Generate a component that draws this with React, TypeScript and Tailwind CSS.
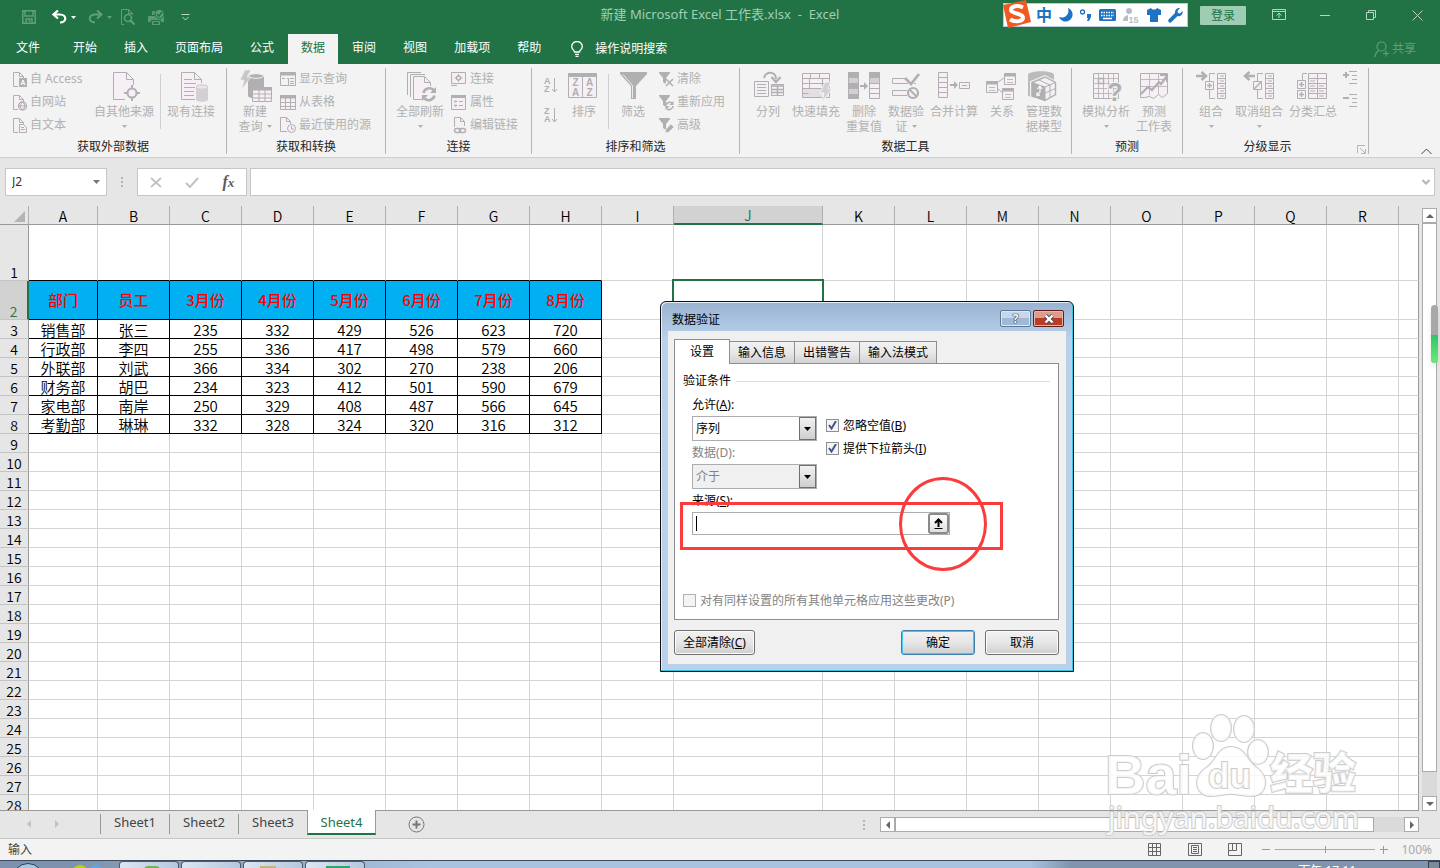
import { useState } from "react";
import type { ReactNode } from "react";
import clsx from "clsx";

const G = "#b1afb1";
const P = "#f6f0f6";
const M = "#d3cfd3";

/* ---------- ribbon icons ---------- */

function Big({ children }: { children: ReactNode }) {
  return (
    <svg width="32" height="32" viewBox="0 0 32 32" fill="none" stroke={G} className="shrink-0 overflow-visible">
      {children}
    </svg>
  );
}

function Small({ children }: { children: ReactNode }) {
  return (
    <svg width="18" height="18" viewBox="0 0 18 18" fill="none" stroke={G} className="shrink-0">
      {children}
    </svg>
  );
}

const OtherSourcesIcon = () => (
  <Big>
    <path d="M17 29.5H5.5v-27h13l7 7V15" fill={P} />
    <path d="M18.5 2.5v7h7" />
    <circle cx="24" cy="23" r="4.5" strokeWidth="2" fill={P} />
    <path d="M24 15v4M24 27v4M16 23h4M28 23h4" strokeWidth="2" />
  </Big>
);

const ExistingIcon = () => (
  <Big>
    <path d="M20 29.5H6.5v-27h13l7 7V13" fill={P} />
    <path d="M19.5 2.5v7h7M9 9.5h8M9 13.5h12M9 17.5h11M9 21.5h10M9 25.5h10" />
    <path d="M21 16.5v13c0 3 12 3 12 0v-13c0-3-12-3-12 0z" fill={M} stroke="none" />
    <ellipse cx="27" cy="17" rx="5" ry="1.6" fill="#eae6ea" stroke="none" />
  </Big>
);

const NewQueryIcon = () => (
  <Big>
    <path d="M9 6v20c0 3 16 3 16 0V6z" fill={G} stroke="none" />
    <ellipse cx="17" cy="6" rx="7.5" ry="2.3" fill={G} stroke="#f3f3f3" />
    <path d="M6 0h6L8 7h4L3 19l2-9H1z" fill="#c9c5c9" stroke="#f3f3f3" strokeWidth=".6" />
    <path d="M13.5 17.5h19v14h-19z" fill={P} />
    <path d="M13 19h20" strokeWidth="3" />
    <path d="M13.5 24h19M13.5 28h19M20 19v12M26 19v12" />
  </Big>
);

const RefreshIcon = () => (
  <Big>
    <path d="M3.5 25V2.5H17M6.5 27V4.5H21" />
    <path d="M18 29.5H9.5v-23h11l6 6V16" fill={P} />
    <path d="M20.5 6.5v6h6" />
    <path d="M19.5 23a6 6 0 0 1 10-3M30.5 25.5a6 6 0 0 1-10 3" strokeWidth="2.6" />
    <path d="M32 17v6h-6zM18 31v-6h6z" fill={G} stroke="none" />
  </Big>
);

const SortIcon = () => (
  <Big>
    <path d="M.5 3.5h28v24H.5z" fill={P} />
    <path d="M0 5h29" strokeWidth="4" />
    <path d="M14.5 5v22" />
    <g fill={G} stroke="none" fontSize="10" fontWeight="700" fontFamily="Liberation Sans, sans-serif" textAnchor="middle">
      <text x="7.5" y="16">Z</text>
      <text x="7.5" y="26">A</text>
      <text x="21.5" y="16">A</text>
      <text x="21.5" y="26">Z</text>
    </g>
  </Big>
);

const FilterIcon = () => (
  <Big>
    <path d="M3 2h27v2L19 16v13h-5V16L3 4z" fill={G} stroke="none" />
    <path d="M6 4.5l9.5 11V28" stroke="#f3f3f3" strokeWidth=".9" />
  </Big>
);

const SplitIcon = () => (
  <Big>
    <path d="M2.5 11.5h14v15h-14z" fill={P} />
    <path d="M5 14.5h9M5 17.5h9M5 20.5h9M5 23.5h9" />
    <path d="M19.5 14.5h12v11h-12z" fill={P} />
    <path d="M19 16h13M25.5 16v9M20 19.5h11M20 22.5h11" strokeWidth="1.5" />
    <path d="M12 8c2-7 12-7 12 1" strokeWidth="2" />
    <path d="M19.5 7l4.5 5 4.5-5" strokeWidth="2.2" />
  </Big>
);

const FlashFillIcon = () => (
  <Big>
    <path d="M2.5 3.5h27v24h-27z" fill={P} />
    <path d="M3 18h19v9H3z" fill="#e2dee2" stroke="none" />
    <path d="M2.5 8.5h27M2.5 18.5h27M10.5 3.5v5M19.5 3.5v5M9.5 8.5h13v10h-13zM2.5 13.5h27M2.5 23.5h6" />
    <path d="M25 12h6l-3 7h4L22 32l2-9h-4z" fill={M} stroke="#f3f3f3" />
  </Big>
);

const RemoveDupIcon = () => (
  <Big>
    <path d="M.5 2.5h10v26H.5z" fill={M} />
    <path d="M0 2h11v6H0zM0 13h11v6H0zM0 24h11v5H0z" fill={G} stroke="none" />
    <path d="M12 16h6" strokeWidth="2" />
    <path d="M16 12l4 4-4 4z" fill={G} stroke="none" />
    <path d="M21.5 2.5h10v26h-10z" fill={P} />
    <path d="M21 2h11v6H21z" fill={G} stroke="none" />
    <path d="M22 8h9v5h-9z" fill={M} stroke="none" />
    <path d="M21.5 13.5h10M21.5 18.5h10M21.5 23.5h10" />
  </Big>
);

const ValidateIcon = () => (
  <Big>
    <path d="M17 8.5H2.5v5H18M24 13.5h2M17 20.5H2.5v5H17" fill={P} />
    <path d="M15 8l6 6L29 4" strokeWidth="2.6" />
    <circle cx="23" cy="23" r="5" strokeWidth="2.2" />
    <path d="M19.5 19.5l7 7" strokeWidth="2" />
  </Big>
);

const ConsolidateIcon = () => (
  <Big>
    <path d="M.5 2.5h9v25h-9z" fill={P} />
    <path d="M.5 7.5h9M.5 12.5h9M.5 17.5h9M.5 22.5h9" />
    <path d="M12 15h6" strokeWidth="2" />
    <path d="M16 11l4 4-4 4z" fill={G} stroke="none" />
    <path d="M21.5 12.5h10v6h-10z" fill={P} />
    <path d="M24 15.5h5" />
  </Big>
);

const RelationIcon = () => (
  <Big>
    <path d="M12 12l6-4M12 19l5 4" />
    <path d="M.5 11.5h11v11H.5zM18.5 3.5h11v11h-11zM16.5 18.5h11v11h-11z" fill={P} />
    <path d="M0 13h12M18 5h12M16 20h12" strokeWidth="3" />
    <path d="M3 17.5h6M21 9.5h6M19 24.5h6M3 20.5h6M21 12.5h6M19 27.5h6" strokeWidth=".8" />
  </Big>
);

const ModelIcon = () => (
  <Big>
    <path d="M0 5C0 0 26 0 26 5v20c-3 4-26 4-26 0z" fill="#bdbabd" stroke="none" />
    <path d="M3 12l14-6 11 6v13l-11 6-14-5z" fill={P} stroke="#f3f3f3" strokeWidth="2" />
    <path d="M4 12.5L17 7l10.5 5.5v12L17 30.5 4 26z" strokeWidth="1.4" />
    <path d="M4 12.5l13 4.5v13L4 26z" fill={G} />
    <path d="M17 17l10.5-4.5M17 23l10.5-4.5M22 15v13M10 9.500L22 15" />
    <path d="M12 17v5l-3 3M9.5 19l2.5-3 2 3M12 25l-3 .5v-3" stroke="#f3f3f3" strokeWidth="1.3" />
  </Big>
);

const WhatIfIcon = () => (
  <Big>
    <path d="M3.5 3.5h25v25h-25z" fill={P} />
    <path d="M3.5 8.5h25M3.5 13.5h25M3.5 18.5h25M3.5 23.5h25M8.5 3.5v25M13.5 3.5v25M18.5 3.5v25M23.5 3.5v25" strokeWidth=".8" />
    <path d="M8.5 8.5h5v5h-5z" strokeWidth="1.5" />
    <text x="25" y="31" fontSize="25" fontWeight="700" fontFamily="Liberation Sans, sans-serif" textAnchor="middle" fill={G} stroke="#f3f3f3" strokeWidth="2" paintOrder="stroke">
      ?
    </text>
  </Big>
);

const ForecastIcon = () => (
  <Big>
    <path d="M2.5 3.5h27v20l-5 4-4-3-5 4-4-2-5 1h-4z" fill={P} />
    <path d="M2.5 9.5h27M2.5 16.5h27M11.5 3.5v22M20.5 3.5v21" strokeWidth=".8" />
    <path d="M3 24l7-7 4 3 7-8 2 2 6-8" strokeWidth="2.2" />
    <path d="M22 5h7v7" strokeWidth="2" />
  </Big>
);

function CellColumn() {
  return (
    <>
      <path d="M22.5 3.5h8v25h-8z" fill={P} />
      <path d="M22.5 8.5h8M22.5 13.5h8M22.5 18.5h8M22.5 23.5h8M25 6h4M25 11h4M25 16h4M25 21h4M25 26h4" />
    </>
  );
}

const GroupIcon = () => (
  <Big>
    <path d="M1 6h8" strokeWidth="2.5" />
    <path d="M6.5 2L11 6l-4.5 4" strokeWidth="2.5" />
    <path d="M20 3.5h-5.5v25H20" />
    <path d="M10.5 11.5h8v8h-8z" fill={P} />
    <path d="M14.5 13v5M12 15.5h5" strokeWidth="1.5" />
    <CellColumn />
  </Big>
);

const UngroupIcon = () => (
  <Big>
    <path d="M12 6H3" strokeWidth="2.5" />
    <path d="M6.5 2L2 6l4.5 4" strokeWidth="2.5" />
    <path d="M20 3.5h-5.5v25H20" />
    <path d="M10.5 11.5h8v8h-8z" fill={P} />
    <path d="M11 19l7-7" strokeWidth="1.5" />
    <CellColumn />
  </Big>
);

const SubtotalIcon = () => (
  <Big>
    <path d="M10 3.5H5.5V11M.5 10.5h8v8h-8zM.5 20.5h8v8h-8z" fill={P} />
    <path d="M4.5 12v5M2 14.5h5M4.5 22v5M2 24.5h5" strokeWidth="1.5" />
    <path d="M11.5 3.5h18v25h-18z" fill={P} />
    <path d="M11.5 8.5h18M11.5 13.5h18M11.5 18.5h18M11.5 23.5h18M20.5 3.5v25M13 11h5M13 16h5M13 21h5M22 16h5M22 21h5M22 26h5" />
  </Big>
);

const doc = <path d="M8 16.5H3.5v-14h6l4 4V9M9.5 2.5v4h4" fill={P} />;

const AccessIcon = () => (
  <Small>
    {doc}
    <path d="M9 8h8v9H9z" fill={G} stroke="none" />
    <path d="M11 15l2-5 2 5M12 13.5h2" stroke="#fff" />
  </Small>
);
const WebIcon = () => (
  <Small>
    {doc}
    <circle cx="12.5" cy="13" r="4" fill={P} strokeWidth="1.3" />
    <path d="M8.5 13h8M12.5 9c-3 3-3 5 0 8M12.5 9c3 3 3 5 0 8" />
  </Small>
);
const TextIcon = () => (
  <Small>
    {doc}
    <path d="M9.5 8.5h4l3 3v5h-7z" fill={P} />
    <path d="M11 11.5h3M11 13.5h4" />
  </Small>
);
const ShowQueryIcon = () => (
  <Small>
    <path d="M1.5 2.5h15v13h-15z" fill={P} />
    <path d="M1 4h16" strokeWidth="3" />
    <path d="M3 8.5h3M8 8.5h2M9.5 8v7M11 8.5h4M11 11.5h4M11 13.5h4" />
  </Small>
);
const TableIcon = () => (
  <Small>
    <path d="M1.5 2.5h15v14h-15z" fill={P} />
    <path d="M1 4h16" strokeWidth="3" />
    <path d="M1.5 9.5h15M1.5 13.5h15M6.5 5v12M11.5 5v12" />
  </Small>
);
const RecentIcon = () => (
  <Small>
    <path d="M8 15.5H1.5v-14h6l4 4V8M7.5 1.5v4h4" fill={P} />
    <circle cx="12.5" cy="12.5" r="4" fill={P} />
    <path d="M12.5 10v3H15" />
  </Small>
);
const ConnIcon = () => (
  <Small>
    <path d="M1.5 2.5h14v11h-14zM1 15.5h6" fill={P} />
    <circle cx="8.5" cy="8" r="2" strokeWidth="1.4" />
    <path d="M8.5 4v2M8.5 10v2M4.5 8h2M10.5 8h2" />
  </Small>
);
const PropsIcon = () => (
  <Small>
    <path d="M1.5 2.5h14v14h-14z" fill={P} />
    <path d="M1 3.5h15" strokeWidth="3" />
    <path d="M9 8.5h4M9 12.5h4M4.5 8h2v1h-2zM4.5 12h2v1h-2z" />
  </Small>
);
const LinksIcon = () => (
  <Small>
    <path d="M4.5 11V1.5h6l4 4V10M10.5 1.5v4h4" fill={P} />
    <rect x="4.5" y="12.5" width="6" height="4" rx="2" strokeWidth="1.5" />
    <rect x="9.5" y="12.5" width="6" height="4" rx="2" strokeWidth="1.5" />
  </Small>
);
const smallFunnel = <path d="M2 2h11v1L9 8v6l-3-2V8L2 3z" fill={G} stroke="none" />;
const ClearIcon = () => (
  <Small>
    {smallFunnel}
    <path d="M9 9l7 7M16 9l-7 7" strokeWidth="1.5" />
  </Small>
);
const ReapplyIcon = () => (
  <Small>
    {smallFunnel}
    <path d="M9 12a4 4 0 0 1 6-2M16 13a4 4 0 0 1-6 3" strokeWidth="1.6" />
    <path d="M16.5 8v4h-4zM8.5 17v-4h4z" fill={G} stroke="none" />
  </Small>
);
const AdvancedIcon = () => (
  <Small>
    {smallFunnel}
    <path d="M8 17l1-4 5-5 3 3-5 5z" fill={G} stroke="#f3f3f3" strokeWidth=".6" />
  </Small>
);

function SortLine({ top, bottom }: { top: string; bottom: string }) {
  return (
    <svg width="18" height="18" viewBox="0 0 18 18" fill="none" stroke={G} className="overflow-visible">
      <g fill={G} stroke="none" fontSize="9" fontWeight="700" fontFamily="Liberation Sans, sans-serif">
        <text x="2" y="8">{top}</text>
        <text x="2" y="16">{bottom}</text>
      </g>
      <path d="M12.5 2v14M10 13l2.5 3 2.5-3" />
    </svg>
  );
}

function Caret({ className }: { className?: string }) {
  return (
    <svg width="5" height="3" viewBox="0 0 5 3" fill="currentColor" className={clsx("inline-block", className)}>
      <path d="M0 0h5L2.5 3z" />
    </svg>
  );
}

/* ---------- ribbon ---------- */

function BigButton({ icon, lines, caret, width = "w-12" }: { icon: ReactNode; lines: string[]; caret?: boolean; width?: string }) {
  return (
    <button type="button" className={clsx("flex shrink-0 flex-col items-center pt-0.5", width)}>
      {icon}
      <span className="mt-0.5 whitespace-nowrap text-center leading-[15px]">
        {lines.map((l, i) => (
          <span key={l} className="block">
            {l}
            {caret && lines.length > 1 && i === lines.length - 1 && <Caret className="mb-0.5 ml-1" />}
          </span>
        ))}
      </span>
      {caret && lines.length === 1 && <Caret className="mt-1.5" />}
    </button>
  );
}

function SmallList({ items, width }: { items: [ReactNode, string][]; width?: string }) {
  return (
    <div className={clsx("-mt-px flex flex-col", width)}>
      {items.map(([icon, label]) => (
        <button key={label} type="button" className="flex h-[23px] items-center gap-0.5 whitespace-nowrap">
          {icon}
          {label}
        </button>
      ))}
    </div>
  );
}

function RibbonGroup({ label, width, children, corner }: { label: string; width: string; children: ReactNode; corner?: ReactNode }) {
  return (
    <section className={clsx("relative flex h-[86px] shrink-0 flex-col border-r border-[#b5b5b5]", width)}>
      <div className="flex h-[72px] shrink-0 gap-1.5 pl-2.5">{children}</div>
      <h2 className={clsx("text-center leading-[14px] text-[#262626]", corner && "pr-4")}>{label}</h2>
      {corner}
    </section>
  );
}

const Divider = () => <div className="mt-1.5 h-[55px] w-px shrink-0 bg-[#d0d0d0]" />;

function Ribbon() {
  return (
    <div className="relative flex h-[94px] shrink-0 border-b border-[#cfcfcf] bg-[#f3f3f3] pt-1 text-[12px] text-[#b1b1b1]">
      <RibbonGroup label="获取外部数据" width="w-[227px]">
        <SmallList width="w-[78px]" items={[[<AccessIcon />, "自 Access"], [<WebIcon />, "自网站"], [<TextIcon />, "自文本"]]} />
        <BigButton icon={<OtherSourcesIcon />} lines={["自其他来源"]} caret width="w-[60px]" />
        <Divider />
        <BigButton icon={<ExistingIcon />} lines={["现有连接"]} />
      </RibbonGroup>
      <RibbonGroup label="获取和转换" width="w-[159px]">
        <BigButton icon={<NewQueryIcon />} lines={["新建", "查询"]} caret width="w-9" />
        <SmallList items={[[<ShowQueryIcon />, "显示查询"], [<TableIcon />, "从表格"], [<RecentIcon />, "最近使用的源"]]} />
      </RibbonGroup>
      <RibbonGroup label="连接" width="w-[146px]">
        <BigButton icon={<RefreshIcon />} lines={["全部刷新"]} caret />
        <SmallList items={[[<ConnIcon />, "连接"], [<PropsIcon />, "属性"], [<LinksIcon />, "编辑链接"]]} />
      </RibbonGroup>
      <RibbonGroup label="排序和筛选" width="w-[208px]">
        <div className="flex flex-col gap-3 pt-2">
          <button type="button" aria-label="升序"><SortLine top="A" bottom="Z" /></button>
          <button type="button" aria-label="降序"><SortLine top="Z" bottom="A" /></button>
        </div>
        <BigButton icon={<SortIcon />} lines={["排序"]} width="w-9" />
        <Divider />
        <BigButton icon={<FilterIcon />} lines={["筛选"]} width="w-9" />
        <SmallList items={[[<ClearIcon />, "清除"], [<ReapplyIcon />, "重新应用"], [<AdvancedIcon />, "高级"]]} />
      </RibbonGroup>
      <RibbonGroup label="数据工具" width="w-[332px]">
        <BigButton icon={<SplitIcon />} lines={["分列"]} width="w-9" />
        <BigButton icon={<FlashFillIcon />} lines={["快速填充"]} />
        <BigButton icon={<RemoveDupIcon />} lines={["删除", "重复值"]} width="w-9" />
        <BigButton icon={<ValidateIcon />} lines={["数据验", "证"]} caret width="w-9" />
        <BigButton icon={<ConsolidateIcon />} lines={["合并计算"]} />
        <BigButton icon={<RelationIcon />} lines={["关系"]} width="w-9" />
        <BigButton icon={<ModelIcon />} lines={["管理数", "据模型"]} width="w-9" />
      </RibbonGroup>
      <RibbonGroup label="预测" width="w-[111px]">
        <BigButton icon={<WhatIfIcon />} lines={["模拟分析"]} caret />
        <BigButton icon={<ForecastIcon />} lines={["预测", "工作表"]} width="w-9" />
      </RibbonGroup>
      <RibbonGroup
        label="分级显示"
        width="w-[186px]"
        corner={
          <button type="button" aria-label="分级显示设置" className="absolute right-0.5 bottom-0">
            <svg width="9" height="9" viewBox="0 0 9 9" fill="none" stroke="#b5b5b5">
              <path d="M.5 8V.5H8M3 3l5 5M8.5 4v4.5H4" />
            </svg>
          </button>
        }
      >
        <BigButton icon={<GroupIcon />} lines={["组合"]} caret width="w-9" />
        <BigButton icon={<UngroupIcon />} lines={["取消组合"]} caret />
        <BigButton icon={<SubtotalIcon />} lines={["分类汇总"]} />
        <div className="flex flex-col gap-2 pt-0.5">
          {["显示明细数据", "隐藏明细数据"].map((label, i) => (
            <button key={label} type="button" aria-label={label}>
              <svg width="15" height="15" viewBox="0 0 15 15" fill="none" stroke={G}>
                <path d="M0 5h6" strokeWidth="2" />
                {i === 0 && <path d="M3 2v6" strokeWidth="2" />}
                <path d="M6 1.5h8M9 5.5h5M9 9.5h5M6 13.5h8" />
              </svg>
            </button>
          ))}
        </div>
      </RibbonGroup>
      <button type="button" aria-label="折叠功能区" className="mt-auto mr-2 mb-0.5 ml-auto">
        <svg width="11" height="7" viewBox="0 0 11 7" fill="none" stroke="#444">
          <path d="M.5 6l5-5 5 5" />
        </svg>
      </button>
    </div>
  );
}

/* ---------- title bar ---------- */

function SogouBar() {
  return (
    <div className="absolute top-0 right-[252px] flex h-[27px] items-end text-[#1f72c4]">
      <div className="flex h-6 items-center gap-[7px] border border-[#b9cbdc] bg-white pr-1 pl-8">
        <span className="text-[16px] leading-4 font-bold">中</span>
        <svg width="14" height="14" viewBox="0 0 14 14" fill="currentColor">
          <path d="M9 0a7 7 0 1 1-9 9c6 2 11-3 9-9z" />
        </svg>
        <svg width="12" height="12" viewBox="0 0 12 12" fill="currentColor">
          <circle cx="2.5" cy="3" r="2" fill="none" stroke="currentColor" strokeWidth="1.4" />
          <path d="M7 5h4v3l-2 4H7l1-3H7z" />
        </svg>
        <svg width="17" height="12" viewBox="0 0 17 12" fill="currentColor">
          <rect width="17" height="12" rx="1.5" />
          <path d="M2 3.5h13M2 6.5h13" stroke="#fff" strokeWidth="1.5" strokeDasharray="1.5 1" />
          <path d="M4 9.5h9" stroke="#fff" strokeWidth="1.5" />
        </svg>
        <svg width="17" height="15" viewBox="0 0 17 15" fill="#b4bdd0">
          <circle cx="6" cy="3" r="3" />
          <path d="M0 13c0-8 12-8 12 0z" />
          <rect x="5" y="7" width="12" height="8" fill="#fff" />
          <text x="5.5" y="14.5" fontSize="9" fontWeight="700" fontFamily="Liberation Sans, sans-serif">15</text>
        </svg>
        <svg width="14" height="14" viewBox="0 0 14 14" fill="currentColor">
          <path d="M4 0c1 2 5 2 6 0l4 2v5h-3v7H3V7H0V2z" />
        </svg>
        <svg width="15" height="15" viewBox="0 0 15 15" fill="currentColor">
          <path d="M1 11l6-6c-.5-3 2-5.500 5-5L9.500 3l.5 2 2 .5L14.500 3c1 3-2 6-5 5l-6 6c-2 2-4.500-1-2.500-3z" />
        </svg>
      </div>
      <svg width="28" height="28" viewBox="0 0 28 28" className="absolute top-0 left-0">
        <path d="M0 5L23 0l5 22-23 6z" fill="#f05a22" />
        <path d="M20 7.5C15 5 8 6 8 10c0 4 12 3 12 7.500 0 4-8 5-13 2" fill="none" stroke="#fff" strokeWidth="4" />
      </svg>
    </div>
  );
}

function TitleBar() {
  const faded = "text-[#5f9f79]";
  return (
    <header className="relative grid h-[34px] grid-cols-[1fr_auto_1fr] text-[12px]">
      <div className="flex items-center gap-2 pl-[22px]">
        <button type="button" aria-label="保存" className={clsx("mr-2", faded)}>
          <svg width="14" height="14" viewBox="0 0 14 14" fill="none" stroke="currentColor" strokeWidth="1.5">
            <path d="M.8.8h12.400v12.400H.8zM3 1v5h8V1M4 13V9h6v4M7.500 10v2" />
          </svg>
        </button>
        <button type="button" aria-label="撤消" className="mr-1 flex items-center gap-1 text-white">
          <svg width="15" height="14" viewBox="0 0 15 14" fill="none" stroke="currentColor" strokeWidth="2.2">
            <path d="M6 .5L1.500 4.500 6 8.500M2 4.500h6c7 0 7 8 0 8" />
          </svg>
          <Caret />
        </button>
        <button type="button" aria-label="恢复" className={clsx("flex items-center gap-1", faded)}>
          <svg width="15" height="14" viewBox="0 0 15 14" fill="none" stroke="currentColor" strokeWidth="2">
            <path d="M9 .5l4.500 4L9 8.500M13 4.500H7c-7 0-7 8 0 8" />
          </svg>
          <Caret />
        </button>
        <button type="button" aria-label="打印预览" className={clsx("mr-1", faded)}>
          <svg width="16" height="16" viewBox="0 0 16 16" fill="none" stroke="currentColor">
            <path d="M4 15.500H1.500V.5h7l4 4V6M8.500.5v4h4" />
            <circle cx="8" cy="9" r="3.5" strokeWidth="1.6" />
            <path d="M10.500 11.500l4 4" strokeWidth="2.2" />
          </svg>
        </button>
        <button type="button" aria-label="快速打印" className={clsx("mr-2", faded)}>
          <svg width="17" height="17" viewBox="0 0 17 17" fill="currentColor">
            <path d="M0 7h16v6h-3v-2H3v2H0zM4 12h8v4H4zM4 2h4v4H4z" fillOpacity=".9" />
            <circle cx="11.5" cy="5" r="4.5" stroke="#217346" />
            <path d="M9 5l2 2 3-4" fill="none" stroke="#217346" strokeWidth="1.5" />
            <path d="M5.5 13h5v2h-5z" fill="#217346" />
          </svg>
        </button>
        <button type="button" aria-label="自定义快速访问工具栏" className="text-[#b5d6c3]">
          <svg width="9" height="7" viewBox="0 0 9 7" fill="none" stroke="currentColor">
            <path d="M.5.5h8M1.500 3l3 3 3-3" />
          </svg>
        </button>
      </div>
      <h1 className="self-center pb-1 text-[13px] whitespace-pre text-[#9fcfb4]">新建 Microsoft Excel 工作表.xlsx  -  Excel</h1>
      <div className="flex justify-end text-[#b5d6c3]">
        <button type="button" className="mt-1.5 mr-2.5 h-[19px] w-[46px] rounded-[1px] bg-[#9fcdb3] leading-[19px] text-[#217346]">登录</button>
        <button type="button" aria-label="功能区显示选项" className="grid h-[30px] w-[46px] place-items-center">
          <svg width="14" height="12" viewBox="0 0 14 12" fill="none" stroke="currentColor">
            <path d="M.5.5h13v10H.5zM.5 2.500h13M7 9V4.500M4.500 6.500L7 4l2.500 2.500" />
          </svg>
        </button>
        <button type="button" aria-label="最小化" className="grid h-[30px] w-[46px] place-items-center">
          <span className="h-px w-2.5 bg-current" />
        </button>
        <button type="button" aria-label="还原" className="grid h-[30px] w-[46px] place-items-center">
          <svg width="11" height="11" viewBox="0 0 11 11" fill="none" stroke="currentColor">
            <path d="M.5 2.500h7v7h-7zM2.500 2V.5h7v7H8" />
          </svg>
        </button>
        <button type="button" aria-label="关闭" className="grid h-[30px] w-[46px] place-items-center">
          <svg width="11" height="11" viewBox="0 0 11 11" fill="none" stroke="currentColor">
            <path d="M.5.5l10 10M10.500.5l-10 10" />
          </svg>
        </button>
      </div>
      <SogouBar />
    </header>
  );
}

const TABS = ["开始", "插入", "页面布局", "公式", "数据", "审阅", "视图", "加载项", "帮助"];

function MenuTabs() {
  return (
    <nav className="flex h-[30px] gap-px text-[12px] text-white">
      <button type="button" className="mr-[3px] px-4 pb-0.5">文件</button>
      {TABS.map((t) => (
        <button key={t} type="button" className={clsx("px-[13px] pb-0.5", t === "数据" && "bg-[#f3f3f3] text-[#217346]")}>
          {t}
        </button>
      ))}
      <button type="button" className="ml-4 flex items-center gap-3">
        <svg width="12" height="16" viewBox="0 0 12 16" fill="none" stroke="currentColor" strokeWidth="1.3">
          <path d="M3.500 11C3.500 9 .7 8.500.7 5.500a5.300 5 0 0 1 10.600 0C11.300 8.500 8.500 9 8.500 11zM4 13.300h4M4.500 15.300h3" />
        </svg>
        操作说明搜索
      </button>
      <button type="button" className="mr-6 ml-auto flex items-center gap-0.5 text-[#5f9f79]">
        <svg width="16" height="16" viewBox="0 0 16 16" fill="none" stroke="currentColor" strokeWidth="1.2">
          <circle cx="7.5" cy="5.5" r="4.5" />
          <path d="M1 16c0-3 2-6 4.500-6.500M12 9.500v6M9 12.500h6" />
        </svg>
        共享
      </button>
    </nav>
  );
}

/* ---------- formula bar ---------- */

function FormulaBar() {
  return (
    <div className="flex h-12 shrink-0 items-start bg-[#e6e6e6] pt-2.5 pr-[5px] pl-[5px]">
      <div className="flex h-7 w-[102px] items-center border border-[#c6c6c6] bg-white pr-1.5">
        <input aria-label="名称框" defaultValue="J2" className="w-0 flex-1 bg-transparent pl-1.5 text-[12px] text-[#333] outline-none" />
        <svg width="7" height="4" viewBox="0 0 7 4" fill="#777">
          <path d="M0 0h7L3.500 4z" />
        </svg>
      </div>
      <div className="grid h-7 w-[30px] content-center justify-center gap-0.5">
        <span className="h-0.5 w-0.5 bg-[#b5b5b5]" />
        <span className="h-0.5 w-0.5 bg-[#b5b5b5]" />
        <span className="h-0.5 w-0.5 bg-[#b5b5b5]" />
      </div>
      <div className="mr-[3px] flex h-7 w-[110px] items-center justify-around border border-[#c6c6c6] bg-white">
        <button type="button" aria-label="取消">
          <svg width="12" height="11" viewBox="0 0 12 11" fill="none" stroke="#c2c2c2" strokeWidth="1.8">
            <path d="M1 1l10 9M11 1L1 10" />
          </svg>
        </button>
        <button type="button" aria-label="输入">
          <svg width="14" height="11" viewBox="0 0 14 11" fill="none" stroke="#c2c2c2" strokeWidth="2">
            <path d="M1 6l4 4 8-9" />
          </svg>
        </button>
        <button type="button" className="font-['Liberation_Serif',serif] text-[16px] leading-5 font-bold text-[#5c5c5c] italic">
          f<span className="text-[13px]">x</span>
        </button>
      </div>
      <div className="flex h-7 flex-1 items-center border border-[#c6c6c6] bg-white pr-1">
        <input aria-label="编辑栏" className="w-0 flex-1 px-1 text-[12px] outline-none" />
        <svg width="8" height="6" viewBox="0 0 8 6" fill="none" stroke="#b5b5b5" strokeWidth="2">
          <path d="M.5 1L4 4.500 7.500 1" />
        </svg>
      </div>
    </div>
  );
}

/* ---------- grid ---------- */

const COLS = "ABCDEFGHIJKLMNOPQR".split("");
const HEAD = ["部门", "员工", "3月份", "4月份", "5月份", "6月份", "7月份", "8月份"];
const ROWS = [
  ["销售部", "张三", 235, 332, 429, 526, 623, 720],
  ["行政部", "李四", 255, 336, 417, 498, 579, 660],
  ["外联部", "刘武", 366, 334, 302, 270, 238, 206],
  ["财务部", "胡巴", 234, 323, 412, 501, 590, 679],
  ["家电部", "南岸", 250, 329, 408, 487, 566, 645],
  ["考勤部", "琳琳", 332, 328, 324, 320, 316, 312],
];

function cellValue(row: number, col: number) {
  if (col > 7) return null;
  if (row === 2) return HEAD[col];
  return ROWS[row - 3]?.[col] ?? null;
}

function Sheet() {
  return (
    <div className="min-w-0 flex-1 overflow-hidden border-b border-[#999]">
      <table className="w-full table-fixed border-separate border-spacing-0 font-['Noto_Sans_CJK_SC',sans-serif] text-[15px] leading-4 font-[350] text-black">
        <colgroup>
          <col className="w-[29px]" />
          {COLS.map((c) => (
            <col key={c} className={c === "A" ? "w-[69px]" : c === "J" ? "w-[149px]" : "w-[72px]"} />
          ))}
          <col />
        </colgroup>
        <thead>
          <tr>
            <th className="h-[19px] border-r border-b border-[#999] border-r-[#b0b0b0] bg-[#e6e6e6] p-0">
              <svg width="11" height="11" viewBox="0 0 11 11" fill="#b4b4b4" className="mt-0.5 mr-[3px] ml-auto">
                <path d="M11 0v11H0z" />
              </svg>
            </th>
            {COLS.map((c) => (
              <th
                key={c}
                className={clsx(
                  "h-[19px] border-r border-r-[#b0b0b0] p-0 pt-0.5 text-[14px] leading-[15px] font-[350]",
                  c === "J" ? "border-b-2 border-b-[#217346] bg-[#d2d2d2] text-[#217346]" : "border-b border-b-[#999] bg-[#e6e6e6]",
                )}
              >
                {c}
              </th>
            ))}
            <th className="border-b border-b-[#999] bg-[#e6e6e6] p-0" />
          </tr>
        </thead>
        <tbody>
          {Array.from({ length: 28 }, (_, i) => i + 1).map((r) => (
            <tr key={r} className={r === 1 ? "h-14" : r === 2 ? "h-[39px]" : "h-[19px]"}>
              <th
                className={clsx(
                  "border-b border-b-[#c4c4c4] p-0 text-center align-bottom text-[14px] font-[350]",
                  r === 2 ? "border-r-2 border-r-[#217346] bg-[#d2d2d2] text-[#217346]" : "border-r border-r-[#999] bg-[#e6e6e6]",
                )}
              >
                {r}
              </th>
              {COLS.map((c, ci) => {
                const inTable = r >= 2 && r <= 8 && ci < 8;
                return (
                  <td
                    key={c}
                    className={clsx(
                      "relative border-r border-b p-0 text-center",
                      inTable ? "border-r-black" : "border-r-[#d4d4d4]",
                      inTable || (r === 1 && ci < 8) ? "border-b-black" : "border-b-[#d4d4d4]",
                      r === 2 && ci < 8 ? "bg-[#00b0f0] align-middle font-medium text-[#ff0000]" : "align-bottom",
                    )}
                  >
                    {cellValue(r, ci)}
                    {r === 2 && c === "J" && <span className="absolute -inset-0.5 border-2 border-[#217346]" />}
                  </td>
                );
              })}
              <td className="border-r border-b border-r-[#999] border-b-[#d4d4d4] p-0" />
            </tr>
          ))}
        </tbody>
      </table>
    </div>
  );
}

const ARROWS = {
  up: "M0 4h8L4 0z",
  down: "M0 0h8L4 4z",
  left: "M4 0v8L0 4z",
  right: "M0 0v8l4-4z",
};

function ScrollButton({ dir, label }: { dir: keyof typeof ARROWS; label: string }) {
  const flat = dir === "up" || dir === "down";
  return (
    <button type="button" aria-label={label} className="grid h-[15px] w-[15px] shrink-0 place-items-center border border-[#ababab] bg-white">
      <svg width={flat ? 8 : 4} height={flat ? 4 : 8} fill="#666">
        <path d={ARROWS[dir]} />
      </svg>
    </button>
  );
}

function VerticalScroll() {
  return (
    <div className="relative mt-0.5 mr-[3px] ml-[3px] flex w-[15px] flex-col">
      <ScrollButton dir="up" label="向上滚动" />
      <div className="flex-1 bg-[#dadada] pb-6">
        <div className="h-full border border-[#ababab] bg-white" />
      </div>
      <ScrollButton dir="down" label="向下滚动" />
      <div className="absolute top-[97px] -right-px h-[58px] w-[7px] overflow-hidden rounded-sm bg-[#a8a8a8] shadow-md">
        <div className="mt-[30px] h-7 bg-linear-to-b from-[#27c766] to-[#6fe874]" />
      </div>
    </div>
  );
}

function SheetTabs() {
  const [active, setActive] = useState("Sheet4");
  return (
    <div className="flex h-7 shrink-0 items-start border-b border-[#c6c6c6] bg-[#e6e6e6]">
      <div className="flex w-[100px] items-center gap-6 pt-[9px] pl-[27px] text-[#c2c2c2]">
        <svg width="4" height="8" fill="currentColor"><path d={ARROWS.left} /></svg>
        <svg width="4" height="8" fill="currentColor"><path d={ARROWS.right} /></svg>
      </div>
      {["Sheet1", "Sheet2", "Sheet3", "Sheet4"].map((name) => (
        <button
          key={name}
          type="button"
          onClick={() => setActive(name)}
          className={clsx(
            "w-[69px] text-[13px] leading-4",
            name === active
              ? "relative z-10 -mt-px h-[25px] border-x border-b-2 border-[#999] border-b-[#217346] bg-white text-[#217346]"
              : "mt-[3px] h-5 border-l border-[#999] pb-1 text-[#444]",
          )}
        >
          {name}
        </button>
      ))}
      <button type="button" aria-label="新工作表" className="mt-[5px] ml-8">
        <svg width="17" height="17" viewBox="0 0 17 17" fill="none" stroke="#777">
          <circle cx="8.5" cy="8.5" r="7.5" />
          <path d="M8.500 4.500v8M4.500 8.500h8" strokeWidth="2" />
        </svg>
      </button>
      <div className="mt-1.5 mr-[21px] ml-auto flex w-[556px] items-center">
        <div className="mr-[15px] grid gap-0.5">
          <span className="h-0.5 w-0.5 bg-[#b5b5b5]" />
          <span className="h-0.5 w-0.5 bg-[#b5b5b5]" />
          <span className="h-0.5 w-0.5 bg-[#b5b5b5]" />
        </div>
        <ScrollButton dir="left" label="向左滚动" />
        <div className="h-[15px] flex-1 bg-[#dadada] pr-[30px]">
          <div className="h-full border border-[#ababab] bg-white" />
        </div>
        <ScrollButton dir="right" label="向右滚动" />
      </div>
    </div>
  );
}

function StatusBar() {
  return (
    <div className="flex h-[21px] shrink-0 items-center bg-[#f3f3f3] pr-2 pl-2 text-[12px] text-[#444]">
      <span>输入</span>
      <div className="mr-5 ml-auto flex gap-[26px]">
        <button type="button" aria-label="普通">
          <svg width="14" height="13" viewBox="0 0 14 13" fill="none" stroke="#666">
            <path d="M.5.5h12v12H.5zM4.500.5v12M8.500.5v12M.5 4.500h12M.5 8.500h12" />
          </svg>
        </button>
        <button type="button" aria-label="页面布局">
          <svg width="14" height="13" viewBox="0 0 14 13" fill="none" stroke="#666">
            <path d="M.5.5h13v12H.5zM3.500 2.500h7v8h-7zM5 4.500h4M5 6.500h4M5 8.500h4" />
          </svg>
        </button>
        <button type="button" aria-label="分页预览">
          <svg width="14" height="13" viewBox="0 0 14 13" fill="none" stroke="#666">
            <path d="M.5.5h13v12H.5zM4.500.5v7h-4M4.500 7.500h4v-7" />
          </svg>
        </button>
      </div>
      <div className="flex items-center gap-[5px] text-[#999]">
        <span className="h-px w-2 bg-current" />
        <input
          type="range"
          aria-label="缩放"
          className="h-[7px] w-[100px] appearance-none bg-transparent [&::-webkit-slider-runnable-track]:h-px [&::-webkit-slider-runnable-track]:bg-[#aaa] [&::-webkit-slider-thumb]:-mt-[3px] [&::-webkit-slider-thumb]:h-[7px] [&::-webkit-slider-thumb]:w-px [&::-webkit-slider-thumb]:appearance-none [&::-webkit-slider-thumb]:bg-[#999]"
        />
        <svg width="8" height="8" viewBox="0 0 8 8" stroke="currentColor"><path d="M0 3.500h8M3.500 0v8" /></svg>
      </div>
      <span className="ml-[13px] text-[#aaa]">100%</span>
    </div>
  );
}

function Taskbar() {
  const win = "h-[7px] w-[60px] rounded-t-sm border border-b-0 border-[#4b5a6b] bg-linear-to-r from-[#dbe6f2] to-[#b4c8de] pt-1";
  return (
    <div className="flex h-2 shrink-0 items-start gap-0.5 overflow-hidden border-t border-[#3d4b5c] bg-linear-to-r from-[#7d93ad] from-5% via-[#a8c2e0] via-30% to-[#a8c2e0]">
      <div className="flex w-[117px] items-start gap-7 pt-0.5 pl-3">
        <span className="h-8 w-8 rounded-full border border-[#23405e] bg-[#a9c6e0]" />
        <span className="mt-0.5 flex"><i className="h-4 w-4 rounded-full bg-[#b9d400]" /><i className="h-4 w-4 rounded-full bg-[#58a9e8]" /></span>
      </div>
      <div className={win}><div className="ml-6 h-1 w-4 rounded-t-full bg-[#6cb850]" /></div>
      <div className={win} />
      <div className={win}><div className="ml-4 h-1 w-4 bg-[#c9b27c]" /></div>
      <div className={win}><div className="ml-5 h-1 w-6 bg-[#2aa868]" /></div>
      <div className="ml-auto flex h-2 w-[410px] justify-end bg-linear-to-r from-transparent to-[#8095ad] to-10%">
        <span className="mt-1 mr-[72px] text-[12px] leading-3 whitespace-nowrap text-white">下午 17:11</span>
        <span className="h-2 w-3 border border-[#333f4c] bg-[#7c8b9a]" />
      </div>
    </div>
  );
}

/* ---------- data validation dialog ---------- */

function ComboBox({ id, value, disabled }: { id: string; value: string; disabled?: boolean }) {
  return (
    <div className={clsx("flex h-[25px] w-[125px] border border-[#abadb3]", disabled ? "bg-[#f0f0f0]" : "bg-white")}>
      <select id={id} disabled={disabled} className={clsx("flex-1 appearance-none pl-[3px] opacity-100 outline-none", disabled && "text-[#838383]")}>
        <option>{value}</option>
      </select>
      <span className="grid w-[17px] place-items-center border border-[#707070] bg-linear-to-b from-[#f2f2f2] to-[#cfcfcf]">
        <svg width="7" height="4" fill="#000"><path d="M0 0h7L3.500 4z" /></svg>
      </span>
    </div>
  );
}

function Check({ id, children, defaultChecked, disabled }: { id: string; children: ReactNode; defaultChecked?: boolean; disabled?: boolean }) {
  return (
    <label htmlFor={id} className={clsx("flex h-[23px] items-center gap-1", disabled && "text-[#838383]")}>
      <span className="relative grid h-[13px] w-[13px]">
        <input
          id={id}
          type="checkbox"
          defaultChecked={defaultChecked}
          disabled={disabled}
          className="peer h-[13px] w-[13px] appearance-none border border-[#8e8f8f] bg-[#f4f4f4] disabled:border-[#b1b1b1]"
        />
        <svg width="9" height="9" viewBox="0 0 9 9" fill="none" stroke="#40568f" strokeWidth="2" className="pointer-events-none absolute top-0.5 left-0.5 hidden peer-checked:block">
          <path d="M1 4l2.500 3.500L8 0" />
        </svg>
      </span>
      <span>{children}</span>
    </label>
  );
}

const pushButton = "h-[25px] rounded-[3px] border bg-linear-to-b from-[#f2f2f2] via-[#e6e6e6] to-[#cfcfcf]";
const plainEdge = "border-[#707070] shadow-[inset_0_0_0_1px_#fcfcfc]";

function ValidationDialog() {
  return (
    <div
      role="dialog"
      aria-label="数据验证"
      className="absolute top-[301px] left-[660px] z-20 w-[414px] rounded-t-md border border-[#111] bg-linear-to-b from-[#9ab3d1] to-[#b9d1ea] to-10% px-[7px] pb-[7px] text-[12px] text-black shadow-[inset_-1px_-1px_0_#35c7e0,inset_1px_1px_0_#e4eefa]"
    >
      <div className="flex h-[29px] items-start justify-between pr-0.5 pl-1">
        <span className="pt-2.5 leading-4">数据验证</span>
        <div className="mt-2 flex gap-0.5">
          <button type="button" aria-label="帮助" className="grid h-[17px] w-[31px] place-items-center rounded-xs border border-[#5f7896] bg-linear-to-b from-[#c6d8ec] from-50% to-[#9fb9d6] to-50% shadow-[inset_0_0_0_1px_#dce8f5]">
            <span className="text-[12px] leading-3 font-bold text-white [text-shadow:0_0_1px_#222,0_0_1px_#222,0_0_1px_#222]">?</span>
          </button>
          <button type="button" aria-label="关闭" className="grid h-[17px] w-[31px] place-items-center rounded-xs border border-[#5c2018] bg-linear-to-b from-[#dd9c8e] from-50% to-[#b93c25] to-50% shadow-[inset_0_0_0_1px_#e8b5aa]">
            <svg width="12" height="10" viewBox="0 0 12 10" fill="none">
              <path d="M2.500 1.500l7 7M9.500 1.500l-7 7" stroke="#4a4a5a" strokeWidth="4" />
              <path d="M2.500 1.500l7 7M9.500 1.500l-7 7" stroke="#fff" strokeWidth="2.4" />
            </svg>
          </button>
        </div>
      </div>

      <div className="bg-[#f0f0f0] px-1.5 pt-2 pb-[9px]">
        <div className="flex items-end">
          <button type="button" className="relative z-10 -mb-px h-[25px] w-14 border border-b-0 border-[#8c8e94] bg-white pb-px">设置</button>
          {["输入信息", "出错警告", "输入法模式"].map((t) => (
            <button key={t} type="button" className="-ml-px h-[22px] border border-b-0 border-[#8c8e94] bg-linear-to-b from-[#f2f2f2] via-[#e8e8e8] to-[#d2d2d2] px-2">
              {t}
            </button>
          ))}
        </div>
        <div className="relative h-[257px] w-[385px] border border-[#8c8e94] bg-white px-2">
          <div className="flex h-[34px] items-center gap-[5px]">
            <span>验证条件</span>
            <span className="h-px flex-1 bg-[#d5dfe5]" />
          </div>
          <div className="flex gap-[9px] pl-[9px]">
            <div>
              <label htmlFor="allow" className="block h-[18px] leading-[14px]">允许(<u>A</u>):</label>
              <ComboBox id="allow" value="序列" />
              <label htmlFor="data" className="block h-[23px] leading-[23px] text-[#838383]">数据(D):</label>
              <ComboBox id="data" value="介于" disabled />
              <label htmlFor="source" className="block h-[23px] leading-[23px]">来源(<u>S</u>):</label>
            </div>
            <div className="pt-4">
              <Check id="blank" defaultChecked>忽略空值(<u>B</u>)</Check>
              <Check id="arrow" defaultChecked>提供下拉箭头(<u>I</u>)</Check>
            </div>
          </div>
          <div className="relative ml-[9px] flex h-[23px] w-[258px] border border-[#abadb3]">
            <input id="source" className="w-0 flex-1 px-1 outline-none" />
            <span className="absolute top-[3px] left-[3px] h-[15px] w-px bg-black" />
            <button type="button" aria-label="选择区域" className="grid h-[21px] w-[21px] place-items-center rounded-[3px] border-2 border-[#8a8a8a] bg-linear-to-b from-white to-[#e0e0e0]">
              <svg width="9" height="11" viewBox="0 0 9 11" fill="none" stroke="#000" strokeWidth="2">
                <path d="M4.500 9V2M1 5l3.500-3.500L8 5" />
                <path d="M.5 10.500h8" strokeWidth="1" />
              </svg>
            </button>
          </div>
          <div className="mt-[54px]">
            <Check id="apply" disabled>对有同样设置的所有其他单元格应用这些更改(P)</Check>
          </div>
          {/* red marker around the source field */}
          <div className="pointer-events-none absolute top-[138px] left-[5px] h-12 w-[323px] border-3 border-[#fa3c3c]" />
          <div className="pointer-events-none absolute top-[113px] left-[224px] h-[94px] w-[88px] rounded-[50%] border-3 border-[#fa3c3c]" />
        </div>
        <div className="mt-2.5 flex gap-2.5">
          <button type="button" className={clsx(pushButton, plainEdge, "mr-auto w-[81px]")}>全部清除(<u>C</u>)</button>
          <button type="button" className={clsx(pushButton, "w-[74px] border-[#3c7fb1] shadow-[inset_0_0_0_1px_#48c8f0]")}>确定</button>
          <button type="button" className={clsx(pushButton, plainEdge, "mr-px w-[74px]")}>取消</button>
        </div>
      </div>
    </div>
  );
}

function Watermark() {
  return (
    <svg
      width="264"
      height="130"
      viewBox="0 0 264 130"
      fill="#fff"
      fillOpacity=".8"
      stroke="#cdcdcd"
      strokeWidth="2"
      paintOrder="stroke"
      className="pointer-events-none absolute right-[75px] bottom-[26px] z-10"
    >
      <text x="4" y="82" fontSize="56" fontWeight="700" fontFamily="Liberation Sans, sans-serif">Bai</text>
      <ellipse cx="102" cy="34" rx="10" ry="13" />
      <ellipse cx="120" cy="16" rx="10" ry="13" />
      <ellipse cx="143" cy="17" rx="10" ry="13" />
      <ellipse cx="157" cy="40" rx="10" ry="12" />
      <path d="M130 35c-14 0-14 14-25 21-14 9-11 28 5 28 8 0 12-2 20-2s12 2 21 2c15 0 18-19 5-28-10-7-12-21-26-21z" />
      <text x="107" y="76" fontSize="35" fontWeight="700" fontFamily="Liberation Sans, sans-serif">du</text>
      <text x="169" y="77" fontSize="43" fontWeight="900" fontFamily="Noto Sans CJK SC, sans-serif">经验</text>
      <text x="7" y="116" fontSize="29" fontFamily="Noto Sans, sans-serif">jingyan.baidu.com</text>
    </svg>
  );
}

export default function App() {
  return (
    <div className="relative flex h-screen flex-col overflow-hidden bg-[#e6e6e6] font-['Noto_Sans','Noto_Sans_CJK_SC',sans-serif] text-[12px]">
      <div className="shrink-0 bg-[#217346]">
        <TitleBar />
        <MenuTabs />
      </div>
      <Ribbon />
      <FormulaBar />
      <main className="flex min-h-0 flex-1">
        <div className="flex min-w-0 flex-1 bg-white">
          <Sheet />
        </div>
        <VerticalScroll />
      </main>
      <SheetTabs />
      <StatusBar />
      <Taskbar />
      <Watermark />
      <ValidationDialog />
    </div>
  );
}
